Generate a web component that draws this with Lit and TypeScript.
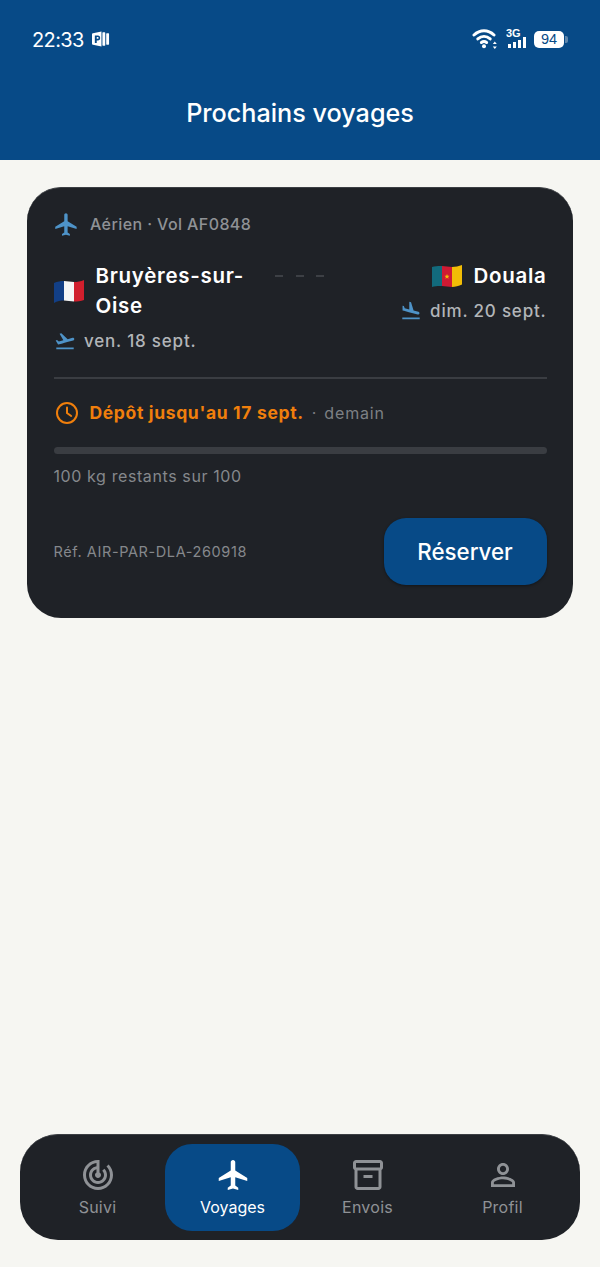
import { LitElement, html, css, svg } from "lit";
import { customElement } from "lit/decorators.js";

const plane = svg`<path d="M21 16v-2l-8-5V3.500C13 2.670 12.330 2 11.500 2S10 2.670 10 3.500V9l-8 5v2l8-2.500V19l-2 1.500V22l3.500-1 3.500 1v-1.500L13 19v-5.500l8 2.500z"/>`;
const takeoff = svg`<path d="M2.500 19h19v2h-19v-2zm19.570-9.360c-.21-.8-1.040-1.280-1.840-1.060L14.920 10l-6.900-6.430-1.930.51 4.140 7.170-4.970 1.330-1.970-1.540-1.450.39 2.590 4.490s7.120-1.900 16.570-4.430c.81-.23 1.280-1.050 1.070-1.850z"/>`;
const landing = svg`<path d="M2.500 19h19v2h-19v-2zm7.180-5.730l4.350 1.160 5.310 1.420c.8.21 1.620-.26 1.840-1.060.21-.8-.26-1.620-1.060-1.840l-5.310-1.420-2.760-9.020L10.120 2v8.280L5.150 8.950l-.93-2.320-1.450-.39v5.170l1.600.43 5.310 1.430z"/>`;

@customElement("app-root")
export class AppRoot extends LitElement {
  static styles = css`
    :host { display: flex; flex-direction: column; height: 1267px; width: 600px; background: #f6f6f2; font-family: Inter, "Liberation Sans", sans-serif; overflow: hidden; }
    .top { background: #074a87; height: 160px; color: #fff; display: flex; flex-direction: column; box-sizing: border-box; padding: 26px 32px 0; }
    .status { display: flex; align-items: center; justify-content: space-between; height: 26px; }
    .left { display: flex; align-items: center; gap: 8px; font-size: 20px; font-weight: 400; letter-spacing: -.6px; line-height: 28px; }
    .left span { position: relative; top: 1px; }
    .right { display: flex; align-items: center; gap: 8px; }
    .batt { display: flex; align-items: center; gap: 1px; }
    .battbody { width: 30px; height: 17px; background: #fff; color: #074a87; border-radius: 5px; font-size: 14.500px; line-height: 17px; text-align: center; font-family: "Liberation Sans", sans-serif; }
    .battcap { width: 3px; height: 7px; background: #5f87ad; border-radius: 0 2px 2px 0; }
    h1 { margin: 39px -32px 0; font-size: 25.200px; font-weight: 500; line-height: 44px; text-align: center; }
    main { flex: 1; padding: 27px 27px 0; }
    .card { background: #1f2227; border-radius: 34px; padding: 22px 26.500px 0; height: 431px; box-sizing: border-box; border-top: 1px solid #3c3f44; color: #fff; }
    .mode { display: flex; align-items: center; gap: 10.500px; color: #8f9296; font-size: 16px; font-weight: 500; letter-spacing: .4px; line-height: 28px; }
    .mode svg { fill: #4e93c8; margin-left: -1px; }
    .route { display: flex; justify-content: space-between; margin-top: 23px; }
    .from { width: 222px; }
    .place { display: flex; align-items: center; gap: 12px; font-size: 20.500px; font-weight: 600; line-height: 30px; letter-spacing: .7px; }
    .to { display: flex; flex-direction: column; align-items: flex-end; }
    .date { display: flex; align-items: center; gap: 8.500px; color: #b2b5b8; font-size: 17px; font-weight: 500; line-height: 30px; letter-spacing: .8px; margin-top: 5px; }
    .date svg { fill: #4e93c8; }
    .dash { display: flex; gap: 12.500px; margin-top: 14px; height: 2px; flex: 1; justify-content: center; margin-left: -7px; margin-right: 69px; }
    .dash i { width: 8px; height: 2px; background: #3d4045; }
    .rule { height: 2px; background: #3a3d42; margin-top: 21px; }
    .deadline { display: flex; align-items: center; margin-top: 20px; line-height: 28px; }
    .deadline svg { margin: 0 11px 0 1px; }
    .deadline b { color: #f07f0c; font-size: 17.500px; font-weight: 700; letter-spacing: .65px; }
    .deadline .sep { color: #7a7d81; margin: 0 8px; font-size: 16px; }
    .deadline .soon { color: #7d8084; font-size: 16px; font-weight: 400; letter-spacing: .85px; }
    .bar { height: 7px; border-radius: 4px; background: #3a3d42; margin-top: 20px; }
    .left-kg { color: #85888c; font-size: 16px; letter-spacing: .6px; font-weight: 400; line-height: 24px; margin-top: 10px; }
    .foot { display: flex; align-items: center; justify-content: space-between; margin-top: 30px; }
    .ref { color: #85888c; font-size: 14.500px; letter-spacing: .6px; }
    .btn { width: 163px; height: 67px; background: #074a87; border-radius: 22px; border: 0; color: #fff; font: 500 22.300px Inter, sans-serif; box-shadow: 0 1px 3px rgba(0,0,0,.4); padding: 0; }
    nav { margin: 0 20px 27px; height: 106px; background: #1f2227; border-radius: 38px; border-top: 1px solid #3c3f44; box-sizing: border-box; display: grid; grid-template-columns: repeat(4, 135px); align-items: center; justify-content: center; }
    .tab { height: 87px; border-radius: 27px; display: flex; flex-direction: column; align-items: center; color: #8f9296; font-size: 16px; font-weight: 400; padding-top: 13px; box-sizing: border-box; gap: 2px; letter-spacing: .25px; line-height: 24px; }
    .tab svg { display: block; fill: #8f9296; }
    .tab.on { background: #074a87; color: #fff; letter-spacing: 0; }
    .tab.on svg { fill: #fff; }
  `;

  render() {
    return html`
      <header class="top">
        <div class="status">
          <div class="left"><span>22:33</span>
            <svg width="18" height="18" viewBox="0 0 19 18" fill="#fff">
              <path fill-rule="evenodd" d="M1 3l9-2v16l-9-2a1 1 0 0 1-1-1V4a1 1 0 0 1 1-1zM3 5.200v8h2V10.500h1.500a2.700 2.700 0 0 0 0-5.300H3zm2 1.700h1.300a1 1 0 0 1 0 1.900H5z"/>
              <rect x="11" y="2" width="3" height="14" rx=".6"/><rect x="15" y="3" width="3" height="12" rx=".6"/>
            </svg>
          </div>
          <div class="right">
            <svg width="26" height="22" viewBox="0 1.500 26 22" fill="none" stroke="#fff" stroke-width="3" stroke-linecap="round">
              <path d="M2 8.500c6-5.600 14-5.600 20 0"/><path d="M5.800 12.400c3.800-3.300 8.600-3.300 12.400 0"/><path d="M9.400 16c1.600-1.200 3.600-1.200 5.200 0"/>
              <circle cx="12" cy="19.800" r="2" fill="#fff" stroke="none"/>
              <path d="M22.800 15l2 2.500h-4zM22.800 22.500l-2-2.500h4z" fill="#fff" stroke="none"/>
            </svg>
            <svg width="20" height="24" viewBox="0 0 20 24" fill="#fff">
              <text x="0" y="10" font-size="11" font-weight="700" font-family="Liberation Sans, sans-serif">3G</text>
              <rect x="2" y="17" width="3" height="4"/><rect x="7" y="15" width="3" height="6"/><rect x="12" y="13" width="3" height="8"/><rect x="17" y="10" width="3" height="11"/>
            </svg>
            <div class="batt"><div class="battbody">94</div><div class="battcap"></div></div>
          </div>
        </div>
        <h1>Prochains voyages</h1>
      </header>
      <main>
        <section class="card">
          <div class="mode"><svg width="27" height="27" viewBox="0 0 24 24">${plane}</svg><span>Aérien · Vol AF0848</span></div>
          <div class="route">
            <div class="from">
              <div class="place">
                <svg width="30" height="23" viewBox="0 0 30 23"><path d="M0 3c3-1.500 7-2 10-2v19.500c-3 0-7 .5-10 2.500z" fill="#123f86"/><path d="M10 1c3 0 7 1 10 1v19.500c-3 0-7-1-10-1z" fill="#f5f5f5"/><path d="M20 2c3 0 7-.5 10-2v20c-3 1.500-7 1.500-10 1.500z" fill="#d11f2d"/></svg>
                <span>Bruyères-sur-<br>Oise</span>
              </div>
              <div class="date"><svg width="22" height="22" viewBox="0 0 24 24">${takeoff}</svg>ven. 18 sept.</div>
            </div>
            <div class="dash"><i></i><i></i><i></i></div>
            <div class="to">
              <div class="place">
                <svg width="30" height="22" viewBox="0 0 30 22"><path d="M0 2c3-.8 7-1.200 10-1V21c-3-.2-7 0-10 1z" fill="#126a7c"/><path d="M10 1c3 .2 7 1 10 1v20c-3 0-7-.8-10-1z" fill="#cf1a33"/><path d="M20 2c3 0 7-.8 10-2v19.500c-3 1.200-7 2.500-10 2.500z" fill="#f1bd06"/><path d="M15 9l.7 1.700 1.800.1-1.400 1.200.5 1.800-1.600-1-1.600 1 .5-1.800-1.400-1.200 1.800-.1z" fill="#f1bd06"/></svg>
                <span>Douala</span>
              </div>
              <div class="date"><svg width="22" height="22" viewBox="0 0 24 24">${landing}</svg>dim. 20 sept.</div>
            </div>
          </div>
          <div class="rule"></div>
          <div class="deadline">
            <svg width="24" height="24" viewBox="0 0 24 24" fill="none" stroke="#f07f0c" stroke-width="2"><circle cx="12" cy="12" r="10"/><path d="M12 6.500V12l4.200 3" stroke-linecap="round"/></svg>
            <b>Dépôt jusqu'au 17 sept.</b><span class="sep">·</span><span class="soon">demain</span>
          </div>
          <div class="bar"></div>
          <div class="left-kg">100 kg restants sur 100</div>
          <div class="foot">
            <span class="ref">Réf. AIR-PAR-DLA-260918</span>
            <button class="btn">Réserver</button>
          </div>
        </section>
      </main>
      <nav>
        <div class="tab">
          <svg width="36" height="36" viewBox="0 0 24 24"><path d="M19.070 4.930l-1.410 1.410C19.100 7.790 20 9.790 20 12c0 4.420-3.580 8-8 8s-8-3.580-8-8c0-4.080 3.050-7.440 7-7.930v2.020C8.160 6.570 6 9.030 6 12c0 3.310 2.690 6 6 6s6-2.690 6-6c0-1.660-.67-3.160-1.760-4.240l-1.410 1.410C15.550 9.900 16 10.890 16 12c0 2.210-1.790 4-4 4s-4-1.790-4-4c0-1.860 1.280-3.410 3-3.860v2.140c-.6.350-1 .98-1 1.720 0 1.100.9 2 2 2s2-.9 2-2c0-.74-.4-1.380-1-1.720V2h-1C6.480 2 2 6.480 2 12s4.480 10 10 10 10-4.480 10-10c0-2.760-1.120-5.260-2.930-7.070z"/></svg>
          Suivi
        </div>
        <div class="tab on">
          <svg width="36" height="36" viewBox="0 0 23 24">${plane}</svg>
          Voyages
        </div>
        <div class="tab">
          <svg width="36" height="36" viewBox="0 0 24 24"><path d="M20 2H4c-1 0-2 .9-2 2v3.010c0 .72.430 1.340 1 1.690V20c0 1.100 1.100 2 2 2h14c.9 0 2-.9 2-2V8.700c.57-.35 1-.97 1-1.690V4c0-1.100-1-2-2-2zm-1 18H5V9h14v11zm1-13H4V4h16v3z"/><path d="M9 12h6v2H9z"/></svg>
          Envois
        </div>
        <div class="tab">
          <svg width="36" height="36" viewBox="0 0 24 24"><path d="M12 5.900c1.160 0 2.100.94 2.100 2.100s-.94 2.100-2.100 2.100S9.900 9.160 9.900 8s.94-2.100 2.100-2.100m0 9c2.970 0 6.100 1.460 6.100 2.100v1.100H5.900V17c0-.64 3.130-2.100 6.100-2.100M12 4C9.790 4 8 5.790 8 8s1.790 4 4 4 4-1.790 4-4-1.790-4-4-4zm0 9c-2.670 0-8 1.340-8 4v3h16v-3c0-2.660-5.330-4-8-4z"/></svg>
          Profil
        </div>
      </nav>
    `;
  }
}
